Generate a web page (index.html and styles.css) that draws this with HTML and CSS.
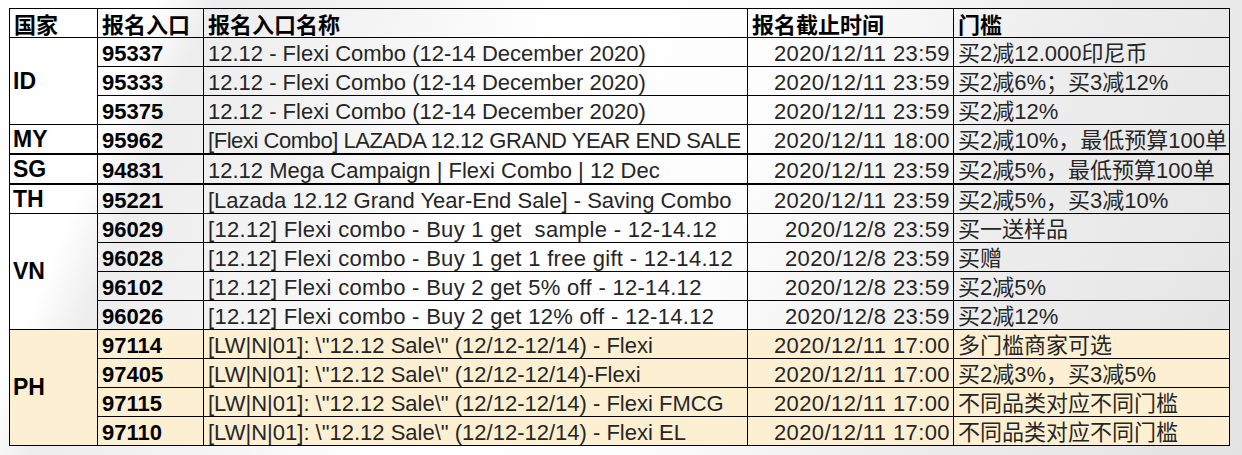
FILE: index.html
```html
<!DOCTYPE html>
<html lang="zh-CN">
<head>
<meta charset="utf-8">
<title>报名入口</title>
<link rel="stylesheet" href="styles.css">
</head>
<body>
<div class="sheet">
<table class="grid">
  <colgroup>
    <col class="w-country"><col class="w-id"><col class="w-name"><col class="w-date"><col class="w-rule">
  </colgroup>
  <thead>
    <tr class="head">
      <th>国家</th><th>报名入口</th><th>报名入口名称</th><th>报名截止时间</th><th>门槛</th>
    </tr>
  </thead>
  <tbody>
    <tr><td class="country" rowspan="3">ID</td><td class="id">95337</td><td class="name">12.12 - Flexi Combo (12-14 December 2020)</td><td class="date">2020/12/11 23:59</td><td class="rule">买2减12.000印尼币</td></tr>
    <tr><td class="id">95333</td><td class="name">12.12 - Flexi Combo (12-14 December 2020)</td><td class="date">2020/12/11 23:59</td><td class="rule">买2减6%；买3减12%</td></tr>
    <tr><td class="id">95375</td><td class="name">12.12 - Flexi Combo (12-14 December 2020)</td><td class="date">2020/12/11 23:59</td><td class="rule">买2减12%</td></tr>
    <tr><td class="country">MY</td><td class="id">95962</td><td class="name caps">[Flexi Combo] LAZADA 12.12 GRAND YEAR END SALE</td><td class="date">2020/12/11 18:00</td><td class="rule">买2减10%，最低预算100单</td></tr>
    <tr class="thick"><td class="country">SG</td><td class="id">94831</td><td class="name">12.12 Mega Campaign | Flexi Combo | 12 Dec</td><td class="date">2020/12/11 23:59</td><td class="rule">买2减5%，最低预算100单</td></tr>
    <tr class="thick"><td class="country">TH</td><td class="id">95221</td><td class="name">[Lazada 12.12 Grand Year-End Sale] - Saving Combo</td><td class="date">2020/12/11 23:59</td><td class="rule">买2减5%，买3减10%</td></tr>
    <tr><td class="country" rowspan="4">VN</td><td class="id">96029</td><td class="name wide">[12.12] Flexi combo - Buy 1 get&nbsp; sample - 12-14.12</td><td class="date">2020/12/8 23:59</td><td class="rule">买一送样品</td></tr>
    <tr><td class="id">96028</td><td class="name wide">[12.12] Flexi combo - Buy 1 get 1 free gift - 12-14.12</td><td class="date">2020/12/8 23:59</td><td class="rule">买赠</td></tr>
    <tr><td class="id">96102</td><td class="name wide">[12.12] Flexi combo - Buy 2 get 5% off - 12-14.12</td><td class="date">2020/12/8 23:59</td><td class="rule">买2减5%</td></tr>
    <tr><td class="id">96026</td><td class="name wide">[12.12] Flexi combo - Buy 2 get 12% off - 12-14.12</td><td class="date">2020/12/8 23:59</td><td class="rule">买2减12%</td></tr>
    <tr class="ph"><td class="country" rowspan="4">PH</td><td class="id">97114</td><td class="name">[LW|N|01]: \"12.12 Sale\" (12/12-12/14) - Flexi</td><td class="date">2020/12/11 17:00</td><td class="rule">多门槛商家可选</td></tr>
    <tr class="ph"><td class="id">97405</td><td class="name">[LW|N|01]: \"12.12 Sale\" (12/12-12/14)-Flexi</td><td class="date">2020/12/11 17:00</td><td class="rule">买2减3%，买3减5%</td></tr>
    <tr class="ph"><td class="id">97115</td><td class="name">[LW|N|01]: \"12.12 Sale\" (12/12-12/14) - Flexi FMCG</td><td class="date">2020/12/11 17:00</td><td class="rule">不同品类对应不同门槛</td></tr>
    <tr class="ph"><td class="id">97110</td><td class="name">[LW|N|01]: \"12.12 Sale\" (12/12-12/14) - Flexi EL</td><td class="date">2020/12/11 17:00</td><td class="rule">不同品类对应不同门槛</td></tr>
  </tbody>
</table>
</div>
</body>
</html>
```

FILE: styles.css
```css
html, body {
  margin: 0;
  padding: 0;
}

body {
  width: 1242px;
  height: 455px;
  overflow: hidden;
  background-color: #e8e8e8;
  background-image: linear-gradient(112deg, #ffffff 0%, #ffffff 11%, #ededed 15%, #f5f5f5 28%, #ffffff 40%, #fcfcfc 58%, #eeeeee 74%, #e3e3e3 100%);
  font-family: "Liberation Sans", "Noto Sans CJK SC", sans-serif;
  color: #262626;
}

.sheet {
  padding: 8px 0 0 9px;
}

.grid {
  border-collapse: collapse;
  table-layout: fixed;
  width: 1220px;
}

.w-country { width: 88px; }
.w-id { width: 106px; }
.w-name { width: 544px; }
.w-date { width: 206px; }
.w-rule { width: 276px; }

.grid th,
.grid td {
  border: 1px solid #000;
  padding: 0 4px 0 4px;
  font-size: 22px;
  line-height: 25px;
  height: 28px;
  vertical-align: bottom;
  white-space: nowrap;
  overflow: hidden;
  text-align: left;
}

.grid th {
  font-family: "Noto Sans CJK SC", sans-serif;
  font-weight: 700;
  color: #000;
  vertical-align: middle;
  line-height: 26px;
}

.grid td.country {
  font-weight: 700;
  color: #000;
  padding-left: 3px;
  vertical-align: middle;
  font-size: 23px;
}

.grid td.id {
  font-weight: 700;
  color: #000;
}

.grid td.name.caps {
  letter-spacing: -0.45px;
}

.grid td.name.wide {
  letter-spacing: 0.3px;
}

.grid td.date {
  text-align: right;
  letter-spacing: 0.4px;
  padding-right: 3px;
}

.grid tr.thick td {
  border-top-width: 2px;
}

.grid tr.ph td {
  background-color: #fdf0d2;
}
```
